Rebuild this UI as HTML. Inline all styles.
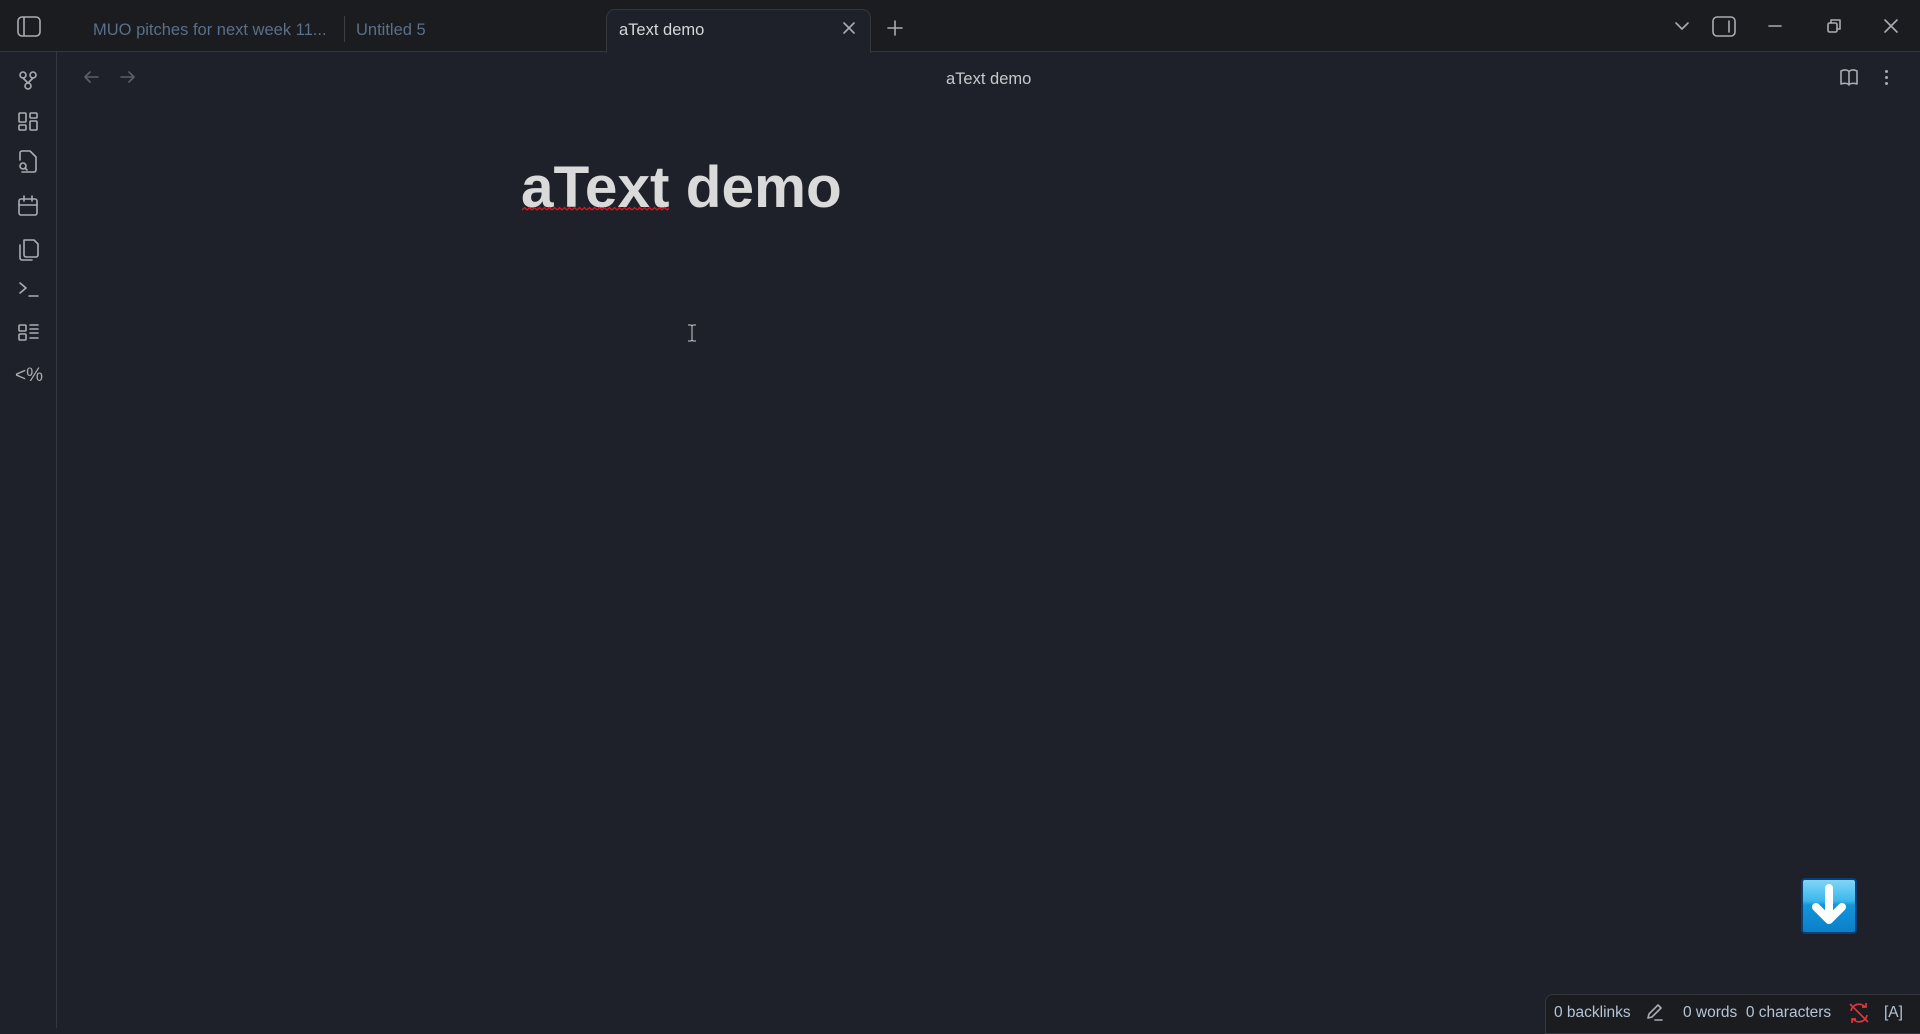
<!DOCTYPE html>
<html><head><meta charset="utf-8"><style>
*{margin:0;padding:0;box-sizing:border-box}
body{width:1920px;height:1028px;background:#1e2129;font-family:"Liberation Sans",sans-serif;position:relative;overflow:hidden;color:#c8c9cc}
.abs{position:absolute}
#top{left:0;top:0;width:1920px;height:52px;background:#1a1c1f;border-bottom:1px solid #34373c}
#rib{left:0;top:52px;width:57px;height:976px;border-right:1px solid #34373c;background:#1e2129}
.t{font-size:16.5px;white-space:nowrap}
svg{position:absolute;overflow:visible}
.ic{stroke:#a9acb1;fill:none;stroke-width:1.6;stroke-linecap:round;stroke-linejoin:round}
</style></head><body>
<div id="top" class="abs"></div>
<div class="abs" style="left:606px;top:9px;width:265px;height:44px;background:#1e2129;border:1px solid #34373c;border-bottom:none;border-radius:9px 9px 0 0"></div>
<div class="abs t" style="left:93px;top:21px;color:#5a6f88">MUO pitches for next week 11...</div>
<div class="abs" style="left:344px;top:16px;width:1px;height:26px;background:#3c3f44"></div>
<div class="abs t" style="left:356px;top:21px;color:#5a6f88">Untitled 5</div>
<div class="abs t" style="left:619px;top:21px;color:#d6d7d9">aText demo</div>
<svg style="left:0;top:0" width="1920" height="60" class="ic">
<rect x="18" y="17" width="22" height="19" rx="4"/><line x1="24" y1="18" x2="24" y2="35"/>
<path d="M844 23l10 10M854 23l-10 10"/>
<path d="M895 21v14M888 28h14" />
<path d="M1676 23l6 6 6-6"/>
<rect x="1713" y="17" width="22" height="19" rx="4"/><line x1="1729" y1="21" x2="1729" y2="32"/>
<path d="M1769 26h12"/>
<rect x="1828" y="23" width="9" height="9" rx="1.5"/><path d="M1831 23v-3h9v9h-3"/>
<path d="M1885 20l12 12M1897 20l-12 12"/>
</svg>
<div id="rib" class="abs"></div>
<svg style="left:0;top:0" width="60" height="400" class="ic">
<circle cx="23" cy="75" r="3"/><circle cx="33" cy="75" r="3"/><circle cx="28" cy="86" r="3"/><path d="M23 78l5 5M33 78l-5 5"/>
<rect x="19" y="113" width="7" height="9" rx="1"/><rect x="30" y="113" width="7" height="5" rx="1"/><rect x="19" y="125" width="7" height="5" rx="1"/><rect x="30" y="121" width="7" height="9" rx="1"/>
<path d="M20 160v-7a2 2 0 0 1 2-2h8l6 6v13a2 2 0 0 1-2 2h-12"/><circle cx="23" cy="166" r="3"/><path d="M25 168l2 2"/>
<rect x="19" y="199" width="18" height="16" rx="2"/><path d="M19 205h18M24 196v5M32 196v5"/>
<path d="M24 240h10l4 4v11a2 2 0 0 1-2 2h-10a2 2 0 0 1-2-2zM20 245v13a2 2 0 0 0 2 2h10"/>
<path d="M20 283l6 5-6 5M29 296h9"/>
<rect x="19" y="325" width="7" height="6" rx="1"/><rect x="19" y="334" width="7" height="6" rx="1"/><path d="M30 325h8M30 329h8M30 333h8M30 338h8"/>
</svg>
<div class="abs" style="left:15px;top:365px;font-size:19px;color:#a9acb1">&lt;%</div>
<svg style="left:0;top:0" width="1920" height="100" class="ic">
<g stroke="#5b5f66"><path d="M98 77h-13M90 72l-5 5 5 5M121 77h13M129 72l5 5-5 5"/></g>
<path d="M1841 71c3-1.5 7-1.5 8 1 1-2.5 5-2.5 8-1v13c-3-1-7-1-8 1-1-2-5-2-8-1zM1849 72v13"/>
</svg>
<div class="abs" style="left:1885px;top:70px;width:3px;height:3px;border-radius:50%;background:#a9acb1;box-shadow:0 6px 0 #a9acb1,0 12px 0 #a9acb1"></div>
<div class="abs t" style="left:946px;top:70px;color:#c8c9cc">aText demo</div>
<div class="abs" style="left:521px;top:155px;font-size:58.5px;font-weight:bold;color:#dadada;line-height:66px;white-space:nowrap">aText demo</div>
<svg style="left:522px;top:206px" width="147" height="6"><defs><pattern id="w" width="5" height="6" patternUnits="userSpaceOnUse"><path d="M0 4l2.5-2.5L5 4" stroke="#e0161e" stroke-width="1.3" fill="none"/></pattern></defs><rect width="147" height="6" fill="url(#w)"/></svg>
<svg style="left:686px;top:324px" width="12" height="18"><path d="M2 1h3l1 1 1-1h3M6 2v14M2 17h3l1-1 1 1h3" stroke="#ccc" fill="none" stroke-width="1"/></svg>
<div class="abs" style="left:1801px;top:878px;width:56px;height:56px;border-radius:4px;border:2px solid #0a3e7a;background:linear-gradient(#7fd6f5 0%,#3cb8ec 40%,#1595d9 48%,#0b7fc8 100%)"></div>
<svg style="left:1801px;top:878px" width="56" height="56"><path d="M28 10v30M15 29l13 13 13-13" stroke="#fff" stroke-width="8" fill="none" stroke-linecap="round" stroke-linejoin="round"/></svg>
<div class="abs" style="left:1545px;top:994px;width:380px;height:40px;background:#1a1c20;border:1px solid #34373c;border-radius:8px 0 0 0"></div>
<div class="abs" style="left:1554px;top:1004px;font-size:15.5px;color:#b5c4d6;white-space:nowrap">0 backlinks</div>
<svg style="left:1645px;top:1003px" width="24" height="20" class="ic"><path d="M3 15l1-4 9-9 3 3-9 9z M10 17h7"/></svg>
<div class="abs" style="left:1683px;top:1004px;font-size:15.5px;color:#b5c4d6;white-space:nowrap">0 words&nbsp; 0 characters</div>
<svg style="left:1848px;top:1002px" width="22" height="22" fill="none" stroke="#e0343e" stroke-width="1.7"><path d="M3 9a8 8 0 0 1 14-4M19 13a8 8 0 0 1-14 4M14 5h4V1M8 17H4v4M2 2l18 18"/></svg>
<div class="abs" style="left:1884px;top:1004px;font-size:15.5px;color:#b5c4d6">[A]</div>
</body></html>
